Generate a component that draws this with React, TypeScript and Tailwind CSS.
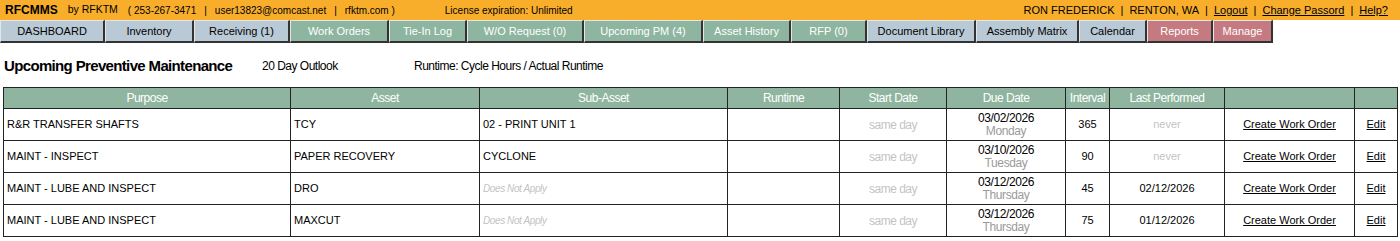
import React from 'react'

const tabs = [
	{ label: 'DASHBOARD', w: 'w-[105px]', tone: 'blue' },
	{ label: 'Inventory', w: 'w-[89px]', tone: 'blue' },
	{ label: 'Receiving (1)', w: 'w-[96px]', tone: 'blue' },
	{ label: 'Work Orders', w: 'w-[99px]', tone: 'green' },
	{ label: 'Tie-In Log', w: 'w-[78px]', tone: 'green' },
	{ label: 'W/O Request (0)', w: 'w-[117px]', tone: 'green' },
	{ label: 'Upcoming PM (4)', w: 'w-[119px]', tone: 'green' },
	{ label: 'Asset History', w: 'w-[88px]', tone: 'green' },
	{ label: 'RFP (0)', w: 'w-[76px]', tone: 'green' },
	{ label: 'Document Library', w: 'w-[109px]', tone: 'blue' },
	{ label: 'Assembly Matrix', w: 'w-[103px]', tone: 'blue' },
	{ label: 'Calendar', w: 'w-[68px]', tone: 'blue' },
	{ label: 'Reports', w: 'w-[66px]', tone: 'red' },
	{ label: 'Manage', w: 'w-[60px]', tone: 'red' },
]

const toneClass: Record<string, string> = {
	blue: 'bg-[#b9c9d6] text-black',
	green: 'bg-[#8db59f] text-white',
	red: 'bg-[#c47a80] text-white',
}

const rows = [
	{ purpose: 'R&R TRANSFER SHAFTS', asset: 'TCY', sub: '02 - PRINT UNIT 1', due: '03/02/2026', day: 'Monday', interval: '365', last: 'never' },
	{ purpose: 'MAINT - INSPECT', asset: 'PAPER RECOVERY', sub: 'CYCLONE', due: '03/10/2026', day: 'Tuesday', interval: '90', last: 'never' },
	{ purpose: 'MAINT - LUBE AND INSPECT', asset: 'DRO', sub: '', due: '03/12/2026', day: 'Thursday', interval: '45', last: '02/12/2026' },
	{ purpose: 'MAINT - LUBE AND INSPECT', asset: 'MAXCUT', sub: '', due: '03/12/2026', day: 'Thursday', interval: '75', last: '01/12/2026' },
]

const th = 'border border-[#222] font-normal text-white text-[12px] tracking-[-0.5px] h-[21px]'
const td = 'border border-[#222] text-[11px] h-[32px] px-[3px]'

const App = () => {
	return (
		<div className="font-['Liberation_Sans',Arial,sans-serif] text-black bg-white w-[1400px] h-[241px] overflow-hidden">
			<div className='flex justify-between items-center h-[20px] bg-[#f8ae2a] px-[5px]'>
				<div className='flex items-center text-[10px]'>
					<span className='font-bold text-[12px] mr-[10px]'>RFCMMS</span>
					<span className='mr-[10px] text-[10.5px]'>by RFKTM</span>
					<div className='flex items-center gap-[8px]'>
						<span>( 253-267-3471</span>
						<span>|</span>
						<span>user13823@comcast.net</span>
						<span>|</span>
						<span>rfktm.com )</span>
					</div>
					<span className='ml-[50px]'>License expiration: Unlimited</span>
				</div>
				<div className='flex items-center gap-[6px] mr-[7px] text-[11px]'>
					<span>RON FREDERICK</span><span>|</span>
					<span>RENTON, WA</span><span>|</span>
					<a className='underline'>Logout</a><span>|</span>
					<a className='underline'>Change Passord</a><span>|</span>
					<a className='underline'>Help?</a>
				</div>
			</div>

			<div className='flex h-[23px]'>
				{tabs.map((t) => (
					<div key={t.label} className={`${t.w} ${toneClass[t.tone]} flex items-center justify-center text-[11px] border-t border-l border-t-[#e6e6e6] border-l-[#e6e6e6] border-r-2 border-b-2 border-r-[#333] border-b-[#333]`}>
						{t.label}
					</div>
				))}
			</div>

			<div className='flex items-center h-[44px] px-[4px] pt-[2px]'>
				<h1 className='font-bold text-[15px] tracking-[-0.65px] w-[258px]'>Upcoming Preventive Maintenance</h1>
				<span className='text-[12px] tracking-[-0.5px] w-[152px]'>20 Day Outlook</span>
				<span className='text-[12px] tracking-[-0.5px]'>Runtime: Cycle Hours / Actual Runtime</span>
			</div>

			<div className='px-[3px]'>
				<table className='w-[1394px] border-collapse border border-[#777] table-fixed'>
					<colgroup>
						<col className='w-[287px]' />
						<col className='w-[189px]' />
						<col className='w-[248px]' />
						<col className='w-[112px]' />
						<col className='w-[107px]' />
						<col className='w-[119px]' />
						<col className='w-[44px]' />
						<col className='w-[115px]' />
						<col className='w-[130px]' />
						<col className='w-[43px]' />
					</colgroup>
					<thead>
						<tr className='bg-[#8fb5a0]'>
							<th className={th}>Purpose</th>
							<th className={th}>Asset</th>
							<th className={th}>Sub-Asset</th>
							<th className={th}>Runtime</th>
							<th className={th}>Start Date</th>
							<th className={th}>Due Date</th>
							<th className={th}>Interval</th>
							<th className={th}>Last Performed</th>
							<th className={th}></th>
							<th className={th}></th>
						</tr>
					</thead>
					<tbody>
						{rows.map((r, i) => (
							<tr key={i}>
								<td className={td}>{r.purpose}</td>
								<td className={td}>{r.asset}</td>
								<td className={td}>
									{r.sub ? r.sub : <span className='italic text-[#c4c4c4] text-[10px] tracking-[-0.4px]'>Does Not Apply</span>}
								</td>
								<td className={td}></td>
								<td className={`${td} text-center text-[#c4c4c4] text-[12px] tracking-[-0.5px]`}>same day</td>
								<td className={`${td} text-center leading-[13px] text-[12px] tracking-[-0.4px]`}>
									<div>{r.due}</div>
									<div className='text-[#9a9a9a]'>{r.day}</div>
								</td>
								<td className={`${td} text-center`}>{r.interval}</td>
								<td className={`${td} text-center ${r.last === 'never' ? 'text-[#c4c4c4]' : ''}`}>{r.last}</td>
								<td className={`${td} text-center`}><a className='underline'>Create Work Order</a></td>
								<td className={`${td} text-center`}><a className='underline'>Edit</a></td>
							</tr>
						))}
					</tbody>
				</table>
			</div>
		</div>
	)
}

export default App
